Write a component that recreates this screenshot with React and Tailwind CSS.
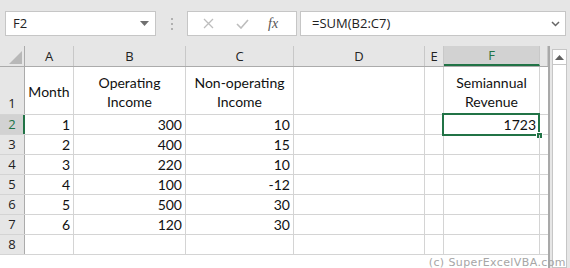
import React from 'react';

const cols = [
  { key: 'A', w: 'w-[49px]' },
  { key: 'B', w: 'w-[112px]' },
  { key: 'C', w: 'w-[108px]' },
  { key: 'D', w: 'w-[131px]' },
  { key: 'E', w: 'w-[19px]' },
  { key: 'F', w: 'w-[96px]' },
  { key: 'G', w: 'w-[8px]' },
];

const data = [
  [1, 300, 10],
  [2, 400, 15],
  [3, 220, 10],
  [4, 100, -12],
  [5, 500, 30],
  [6, 120, 30],
];

function Toolbar() {
  return (
    <div className="flex h-[46px] items-start bg-[#e6e6e6] pt-[11px] pl-[5px]">
      <div className="flex h-[25px] w-[151px] items-center justify-between border border-[#c6c6c6] bg-white pl-[7px] pr-[6px] text-[13px] text-[#222]">
        <span>F2</span>
        <svg width="9" height="5" viewBox="0 0 9 5">
          <polygon points="0,0 9,0 4.5,5" fill="#707070" />
        </svg>
      </div>
      <div className="flex w-[31px] flex-col items-center gap-[3px] pt-[7px]">
        <span className="h-[2px] w-[2px] bg-[#b0b0b0]" />
        <span className="h-[2px] w-[2px] bg-[#b0b0b0]" />
        <span className="h-[2px] w-[2px] bg-[#b0b0b0]" />
      </div>
      <div className="flex h-[25px] w-[110px] items-center border border-[#c6c6c6] bg-white">
        <svg className="ml-[15px]" width="11" height="11" viewBox="0 0 11 11">
          <path d="M1 1 L10 10 M10 1 L1 10" stroke="#bdbdbd" strokeWidth="1.3" />
        </svg>
        <svg className="ml-[22px]" width="13" height="10" viewBox="0 0 13 10">
          <path d="M1 5 L5 9 L12 1" stroke="#bdbdbd" strokeWidth="1.6" fill="none" />
        </svg>
        <span className="ml-[19px] font-['Liberation_Serif'] text-[14px] italic text-[#555]">fx</span>
      </div>
      <div className="ml-[3px] flex h-[25px] w-[266px] items-center justify-between border border-[#c6c6c6] bg-white pl-[11px] pr-[5px] text-[13px] text-[#222]">
        <span>=SUM(B2:C7)</span>
        <svg width="9" height="6" viewBox="0 0 9 6">
          <path d="M1 1 L4.5 4.5 L8 1" stroke="#666" strokeWidth="1.5" fill="none" />
        </svg>
      </div>
    </div>
  );
}

function HeaderRow() {
  return (
    <div className="flex h-[21px] border-b border-[#ababab] bg-[#e6e6e6]">
      <div className="flex w-[25px] items-end justify-end border-r border-[#ababab] pr-[2px] pb-[2px]">
        <svg width="13" height="13" viewBox="0 0 13 13">
          <polygon points="13,0 13,13 0,13" fill="#b8b8b8" />
        </svg>
      </div>
      {cols.map((c) => {
        const sel = c.key === 'F';
        return (
          <div
            key={c.key}
            className={`${c.w} flex items-center justify-center border-r border-[#c8c8c8] pt-[1px] text-[13px] ${
              sel ? 'border-b-2 border-b-[#217346] bg-[#d2d2d2] text-[#217346]' : 'text-[#222]'
            }`}
          >
            {c.key === 'G' ? '' : c.key}
          </div>
        );
      })}
    </div>
  );
}

function Cell({ w, children, className = '' }) {
  return (
    <div className={`${w} flex items-center border-r border-[#d4d4d4] px-[3px] ${className}`}>{children}</div>
  );
}

function TitleRow() {
  return (
    <div className="flex h-[48px] border-b border-[#d4d4d4] font-['Lato'] text-[14px] leading-[19px] text-[#111]">
      <div className="flex w-[25px] items-end justify-center border-r border-[#ababab] bg-[#e6e6e6] pb-[1px] font-['Open_Sans'] text-[13px] text-[#222]">
        1
      </div>
      <Cell w="w-[49px]" className="justify-center pt-[2px]">Month</Cell>
      <Cell w="w-[112px]" className="justify-center pt-[2px] text-center">
        Operating
        <br />
        Income
      </Cell>
      <Cell w="w-[108px]" className="justify-center pt-[2px] text-center">
        Non-operating
        <br />
        Income
      </Cell>
      <Cell w="w-[131px]" />
      <Cell w="w-[19px]" />
      <Cell w="w-[96px]" className="justify-center pt-[2px] text-center">
        Semiannual
        <br />
        Revenue
      </Cell>
      <Cell w="w-[8px]" className="border-r-0" />
    </div>
  );
}

function DataRow({ n, values }) {
  const sel = n === 2;
  return (
    <div className="flex h-[20px] border-b border-[#d4d4d4] font-['Lato'] text-[14px] text-[#111]">
      <div
        className={`flex w-[25px] items-center justify-center border-r font-['Open_Sans'] text-[13px] ${
          sel ? 'border-r-2 border-r-[#217346] bg-[#d2d2d2] pl-[1px] text-[#217346]' : 'border-[#ababab] bg-[#e6e6e6] text-[#222]'
        }`}
      >
        {n}
      </div>
      <Cell w="w-[49px]" className="justify-end">{values ? values[0] : ''}</Cell>
      <Cell w="w-[112px]" className="justify-end">{values ? values[1] : ''}</Cell>
      <Cell w="w-[108px]" className="justify-end">{values ? values[2] : ''}</Cell>
      <Cell w="w-[131px]" />
      <Cell w="w-[19px]" />
      <Cell w="w-[96px]" className="relative justify-end">
        {sel && (
          <>
            1723
            <div className="absolute -top-[2px] -left-[2px] -right-[1px] -bottom-[2px] border-2 border-[#217346]" />
            <div className="absolute -right-[3px] -bottom-[4px] h-[5px] w-[5px] bg-[#217346] outline outline-1 outline-white" />
          </>
        )}
      </Cell>
      <Cell w="w-[8px]" className="border-r-0" />
    </div>
  );
}

export default function App() {
  return (
    <div className="h-[268px] w-[570px] overflow-hidden bg-white font-['Open_Sans',sans-serif]">
      <Toolbar />
      <div className="flex">
        <div className="w-[548px]">
          <HeaderRow />
          <TitleRow />
          {data.map((v, i) => (
            <DataRow key={i} n={i + 2} values={v} />
          ))}
          <DataRow n={8} />
          <div className="flex h-[14px] items-center justify-end font-['DejaVu_Sans'] text-[11px] tracking-[0.4px] text-[#a6a6a6]">
            <span className="translate-x-[18px] translate-y-[1px]">(c) SuperExcelVBA.com</span>
          </div>
        </div>
        <div className="h-[222px] w-[22px] border-l-2 border-[#a9a9a9] bg-[#e6e6e6] pt-[3px] pl-[2px]">
          <div className="h-full w-[15px] border border-[#c6c6c6] bg-white">
            <div className="flex h-[15px] items-center justify-center border-b border-[#c6c6c6]">
              <svg width="9" height="5" viewBox="0 0 9 5">
                <polygon points="4.5,0 9,5 0,5" fill="#606060" />
              </svg>
            </div>
          </div>
        </div>
      </div>
    </div>
  );
}
